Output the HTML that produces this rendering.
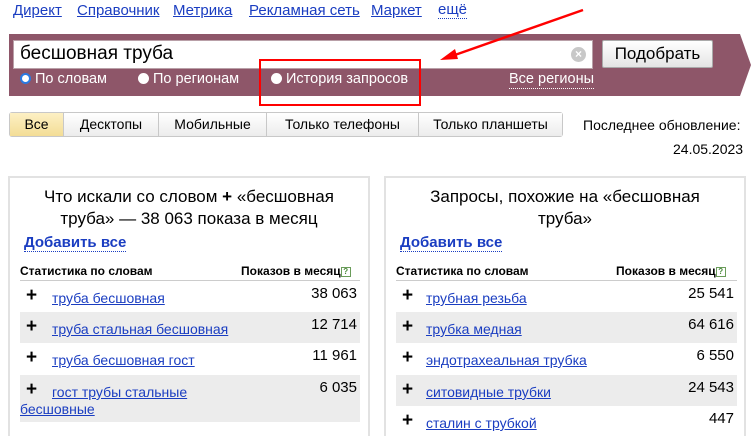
<!DOCTYPE html>
<html><head><meta charset="utf-8"><style>
*{margin:0;padding:0;box-sizing:border-box}
body{width:751px;height:430px;overflow:hidden;background:#fff;font-family:"Liberation Sans","Noto Sans CJK SC",sans-serif;color:#000;position:relative}
.a{position:absolute;white-space:nowrap}
a,.l{color:#1a3dc1;text-decoration:underline}
.top{font-size:15px;top:2px}
.band{position:absolute;left:9px;top:34px;width:742px;height:62px;background:#8e5669;clip-path:polygon(0 0,731px 0,742px 31px,731px 62px,0 62px)}
.inp{position:absolute;left:13px;top:40px;width:580px;height:29px;background:#fff;border:1px solid #b9a0a8;font-size:19px;padding:2px 6px}
.clr{position:absolute;left:571px;top:47px;width:15px;height:15px;border-radius:50%;background:#c8c8c8;color:#fff;font-size:12px;line-height:15px;text-align:center;font-weight:bold}
.btn{position:absolute;left:602px;top:40px;width:111px;height:28px;background:linear-gradient(#fff,#e4e4e4);border:1px solid #aaa;border-radius:2px;font-size:17px;text-align:center;line-height:26px}
.rad{font-size:14.5px;color:#fff;top:71px}
.rb{display:inline-block;width:11px;height:11px;border-radius:50%;background:#fff;vertical-align:-1px;margin-right:4px}
.tabs{position:absolute;left:9px;top:112px;height:25px;display:flex;border:1px solid #c8c8c8;border-radius:3px;font-size:14px}
.tabs div{height:23px;line-height:23px;text-align:center;background:linear-gradient(#fff,#ececec);border-left:1px solid #c8c8c8}
.panel{position:absolute;top:176px;border:2px solid #e2e2e2;border-bottom:none;height:260px}
.h{font-size:17px;text-align:center;line-height:22px;position:absolute;top:8px}
.row{position:absolute;height:31px;font-size:14px}
.g{background:#ececec}
.pl{position:absolute;left:6px;top:4px;font-weight:bold;font-size:19px}
.num{position:absolute;right:3px;top:4px;font-size:15px}
.q{display:inline-block;width:10px;height:10px;border:1px solid #6a9c5a;font-size:8px;line-height:8px;text-align:center;color:#4a8a3a;vertical-align:1px}
</style></head><body>
<span class="a top l" style="left:13px">Директ</span>
<span class="a top l" style="left:77px">Справочник</span>
<span class="a top l" style="left:173px">Метрика</span>
<span class="a top l" style="left:249px">Рекламная сеть</span>
<span class="a top l" style="left:371px">Маркет</span>
<span class="a top" style="left:438px;color:#1a3dc1;border-bottom:1px dotted #1a3dc1;line-height:16px">ещё</span>
<div class="band"></div>
<div class="inp">бесшовная труба</div>
<div class="clr">×</div>
<div class="btn">Подобрать</div>
<span class="a rad" style="left:20px"><span class="rb" style="border:2px solid #2a7ae2"></span>По словам</span>
<span class="a rad" style="left:138px"><span class="rb"></span>По регионам</span>
<span class="a rad" style="left:271px"><span class="rb"></span>История запросов</span>
<span class="a rad" style="left:509px;border-bottom:1px dotted #fff;line-height:17px">Все регионы</span>
<div class="a" style="left:259px;top:59px;width:162px;height:47px;border:2px solid #f00"></div>
<svg class="a" style="left:0;top:0" width="751" height="110"><line x1="583" y1="10" x2="452" y2="56" stroke="#f00" stroke-width="2.5"/><polygon points="440,60 455,49 458,59" fill="#f00"/></svg>
<div class="tabs">
<div style="width:53px;border:none;background:linear-gradient(#fdf0c4,#f3dd96)">Все</div>
<div style="width:95px">Десктопы</div>
<div style="width:108px">Мобильные</div>
<div style="width:152px">Только телефоны</div>
<div style="width:144px">Только планшеты</div>
</div>
<span class="a" style="left:583px;top:117px;font-size:14px">Последнее обновление:</span>
<span class="a" style="left:673px;top:141px;font-size:14px">24.05.2023</span>

<div class="panel" style="left:8px;width:362px">
<div class="h" style="left:0;width:358px">Что искали со словом <b>+</b> «бесшовная<br>труба» — 38 063 показа в месяц</div>
<span class="a" style="left:14px;top:57px;font-size:15px;font-weight:bold;color:#1a3dc1;border-bottom:1px dotted #1a3dc1;line-height:16px">Добавить все</span>
<span class="a" style="left:10px;top:86px;font-size:12px;font-weight:bold">Статистика по словам</span>
<span class="a" style="left:231px;top:86px;font-size:12px;font-weight:bold">Показов в месяц<span class="q">?</span></span>
<div class="a" style="left:10px;top:102px;width:340px;border-top:1px solid #ccc"></div>
<div class="row" style="left:10px;top:103px;width:340px"><span class="pl">+</span><span class="a l" style="left:32px;top:9px">труба бесшовная</span><span class="num">38 063</span></div>
<div class="row g" style="left:10px;top:134px;width:340px"><span class="pl">+</span><span class="a l" style="left:32px;top:9px">труба стальная бесшовная</span><span class="num">12 714</span></div>
<div class="row" style="left:10px;top:165px;width:340px"><span class="pl">+</span><span class="a l" style="left:32px;top:9px">труба бесшовная гост</span><span class="num">11 961</span></div>
<div class="row g" style="left:10px;top:197px;width:340px;height:47px"><span class="pl">+</span><span class="a l" style="left:32px;top:9px">гост трубы стальные</span><span class="a l" style="left:0;top:26px">бесшовные</span><span class="num">6 035</span></div>
</div>

<div class="panel" style="left:384px;width:362px">
<div class="h" style="left:0;width:358px">Запросы, похожие на «бесшовная<br>труба»</div>
<span class="a" style="left:14px;top:57px;font-size:15px;font-weight:bold;color:#1a3dc1;border-bottom:1px dotted #1a3dc1;line-height:16px">Добавить все</span>
<span class="a" style="left:10px;top:86px;font-size:12px;font-weight:bold">Статистика по словам</span>
<span class="a" style="left:230px;top:86px;font-size:12px;font-weight:bold">Показов в месяц<span class="q">?</span></span>
<div class="a" style="left:10px;top:102px;width:341px;border-top:1px solid #ccc"></div>
<div class="row" style="left:10px;top:103px;width:341px"><span class="pl">+</span><span class="a l" style="left:30px;top:9px">трубная резьба</span><span class="num">25 541</span></div>
<div class="row g" style="left:10px;top:134px;width:341px"><span class="pl">+</span><span class="a l" style="left:30px;top:9px">трубка медная</span><span class="num">64 616</span></div>
<div class="row" style="left:10px;top:165px;width:341px"><span class="pl">+</span><span class="a l" style="left:30px;top:9px">эндотрахеальная трубка</span><span class="num">6 550</span></div>
<div class="row g" style="left:10px;top:197px;width:341px"><span class="pl">+</span><span class="a l" style="left:30px;top:9px">ситовидные трубки</span><span class="num">24 543</span></div>
<div class="row" style="left:10px;top:228px;width:341px"><span class="pl">+</span><span class="a l" style="left:30px;top:9px">сталин с трубкой</span><span class="num">447</span></div>
</div>
</body></html>
